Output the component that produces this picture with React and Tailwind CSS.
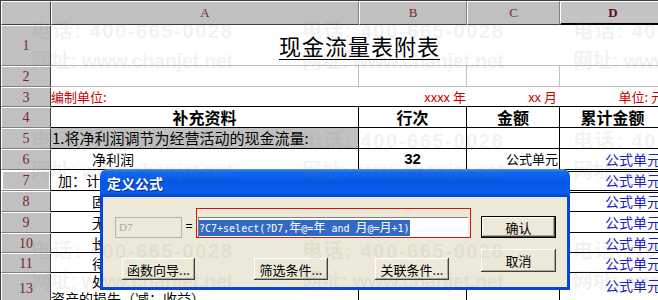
const cjk = "font-['Noto_Sans_CJK_SC',sans-serif]";
const black = "border-r border-b border-black";
const light = "border-r border-b border-[#c0c0c0]";
const blue = "justify-end pr-[4px] text-[14px] text-[#1c1cc8]";

function ColHead({ children, sel }) {
  return (
    <div
      className={
        sel
          ? "flex items-center justify-center bg-[#c4c4c4] border-t border-l border-white border-r border-r-[#808080] border-b-2 border-b-black font-['Liberation_Serif',serif] text-[13px] font-bold text-[#5c0f1c]"
          : "flex items-center justify-center bg-[#c0c0c0] border-t border-l border-white border-r border-b border-r-[#808080] border-b-[#404040] font-['Liberation_Serif',serif] text-[13px] text-[#7a1f2e]"
      }
    >
      {children}
    </div>
  );
}

function RowHead({ n, sel }) {
  return (
    <div
      className={
        sel
          ? "flex items-center justify-center bg-[#c0c0c0] border-t border-l border-white border-r border-b border-r-[#404040] border-b-[#808080] shadow-[inset_0_0_0_1px_#fff] font-['Liberation_Serif',serif] text-[14px] text-[#7a1f2e]"
          : "flex items-center justify-center bg-[#c0c0c0] border-t border-l border-white border-r border-b border-r-[#404040] border-b-[#808080] font-['Liberation_Serif',serif] text-[14px] text-[#7a1f2e]"
      }
    >
      {n}
    </div>
  );
}

function Cell({ className = "", children }) {
  return (
    <div className={`flex items-center whitespace-nowrap leading-[18px] ${className}`}>
      {children}
    </div>
  );
}

function Btn({ className = "", children }) {
  return (
    <div
      className={`flex items-center justify-center bg-[#ece9d8] text-[13px] leading-none text-black shadow-[inset_-1px_-1px_0_#404040,inset_1px_1px_0_#fff,inset_-2px_-2px_0_#aca899] ${className}`}
    >
      {children}
    </div>
  );
}

// half-width formula text, CJK chars a bit bigger like SimSun
function Z({ c }) {
  return <span className="font-['Noto_Sans_CJK_SC',sans-serif] text-[12px]">{c}</span>;
}

export default function App() {
  return (
    <div className={`relative w-[658px] h-[300px] overflow-hidden bg-white border-t border-l border-[#404040] ${cjk}`}>
      {/* Sheet */}
      <div className="grid grid-cols-[50px_308px_108px_93px_106px] grid-rows-[24px_41px_21px_20px_21px_21px_21px_21px_21px_21px_20px_20px_31px] text-black">
        {/* header row */}
        <div className="bg-[#c0c0c0] border-t border-l border-white border-r border-b border-r-[#404040] border-b-[#404040]" />
        <ColHead>A</ColHead>
        <ColHead>B</ColHead>
        <ColHead>C</ColHead>
        <ColHead sel>D</ColHead>

        {/* 1 */}
        <RowHead n="1" />
        <Cell className="col-span-4 justify-center border-b border-[#c0c0c0]">
          <span className="text-[22px] tracking-[1px] underline underline-offset-[4px] decoration-1 leading-[26px] pl-[2px]">现金流量表附表</span>
        </Cell>

        {/* 2 */}
        <RowHead n="2" />
        <Cell className={light} />
        <Cell className={light} />
        <Cell className={light} />
        <Cell className={light} />

        {/* 3 */}
        <RowHead n="3" />
        <Cell className="items-end border-b border-black text-[13px] text-[#cc0000]">编制单位:</Cell>
        <Cell className="items-end justify-end pr-[1px] border-b border-black text-[13px] text-[#cc0000]">{"xxxx 年"}</Cell>
        <Cell className="items-end justify-end pr-[3px] border-b border-black text-[13px] text-[#cc0000]">{"xx 月"}</Cell>
        <Cell className="items-end justify-end pr-[2px] border-b border-black text-[13px] text-[#cc0000]">{"单位: 元"}</Cell>

        {/* 4 */}
        <RowHead n="4" />
        <Cell className={`${black} justify-center text-[16px] font-bold`}>补充资料</Cell>
        <Cell className={`${black} justify-center text-[16px] font-bold`}>行次</Cell>
        <Cell className={`${black} justify-center text-[16px] font-bold`}>金额</Cell>
        <Cell className={`${black} justify-center text-[16px] font-bold`}>累计金额</Cell>

        {/* 5 */}
        <RowHead n="5" />
        <Cell className={`${black} bg-[#c0c0c0] text-[15px] pl-[1px]`}>1.将净利润调节为经营活动的现金流量:</Cell>
        <Cell className={black} />
        <Cell className={black} />
        <Cell className={black} />

        {/* 6 */}
        <RowHead n="6" />
        <Cell className={`${black} pl-[41px] text-[14px]`}>净利润</Cell>
        <Cell className={`${black} justify-center font-['Liberation_Sans',sans-serif] font-bold text-[15px]`}>32</Cell>
        <Cell className={`${black} justify-end pr-[1px] text-[13px]`}>公式单元</Cell>
        <Cell className={`${black} ${blue}`}>公式单元</Cell>

        {/* 7 */}
        <RowHead n="7" sel />
        <Cell className={`${black} pl-[7px] text-[14px]`}>加：计提的资产减值准备</Cell>
        <Cell className={black} />
        <Cell className={black} />
        <Cell className={`${black} ${blue} shadow-[inset_0_1px_0_#fff,inset_0_2px_0_#000]`}>公式单元</Cell>

        {/* 8 */}
        <RowHead n="8" />
        <Cell className={`${black} pl-[41px] text-[14px]`}>固定资产折旧</Cell>
        <Cell className={black} />
        <Cell className={black} />
        <Cell className={`${black} ${blue} shadow-[inset_0_1px_0_#fff,inset_0_2px_0_#000]`}>公式单元</Cell>

        {/* 9 */}
        <RowHead n="9" />
        <Cell className={`${black} pl-[41px] text-[14px]`}>无形资产摊销</Cell>
        <Cell className={black} />
        <Cell className={black} />
        <Cell className={`${black} ${blue}`}>公式单元</Cell>

        {/* 10 */}
        <RowHead n="10" />
        <Cell className={`${black} pl-[41px] text-[14px]`}>长期待摊费用摊销</Cell>
        <Cell className={black} />
        <Cell className={black} />
        <Cell className={`${black} ${blue}`}>公式单元</Cell>

        {/* 11 */}
        <RowHead n="11" />
        <Cell className={`${black} pl-[41px] text-[14px]`}>待摊费用减少（减：增加）</Cell>
        <Cell className={black} />
        <Cell className={black} />
        <Cell className={`${black} ${blue}`}>公式单元</Cell>

        {/* 13 */}
        <RowHead n="13" />
        <div className={`${black} text-[14px] leading-[17px] whitespace-nowrap`}>
          <div className="pl-[41px]">处置固定资产、无形资产和其他长期</div>
          <div>资产的损失（减：收益）</div>
        </div>
        <Cell className={black} />
        <Cell className={black} />
        <Cell className={`${black} ${blue} items-start pt-[3px]`}>公式单元</Cell>
      </div>

      {/* Dialog */}
      <div className="absolute left-[99px] top-[168px] z-10 flex h-[121px] w-[470px] flex-col">
        <div className="flex h-[28px] items-center rounded-t-[7px] bg-[linear-gradient(180deg,#4a95f7_0%,#1468ec_10%,#0457e4_45%,#0a5ce9_85%,#0445cf_100%)] pl-[7px] text-[14px] font-bold text-white [text-shadow:1px_1px_0_#0b2a8f]">
          定义公式
        </div>
        <div className="flex flex-1 border-x-[3px] border-b-[3px] border-[#0846d8] bg-[#ece9d8] pl-[12px] pt-[11px]">
          <div className="flex flex-col">
            <div className="flex items-end">
              <div className="flex h-[21px] w-[67px] items-center border border-[#b5b2a4] pl-[3px] font-['Liberation_Serif',serif] text-[11px] text-[#aca899]">
                D7
              </div>
              <span className="w-[14px] pb-[3px] text-center font-['Liberation_Sans',sans-serif] text-[12px]">=</span>
              <div className="h-[30px] w-[275px] border border-[#d01818] pl-[1px] pr-[2px] pt-[8px]">
                <div className="flex h-[20px] items-center border-t border-l border-[#808080] bg-white leading-[12px]">
                  <span className="bg-[#316ac5] py-[1px] font-['DejaVu_Sans_Mono',monospace] text-[10px] text-white">
                    ?C7+select(?D7,<Z c="年" />@=<Z c="年" /> and <Z c="月" />@=<Z c="月" />+1)
                  </span>
                </div>
              </div>
            </div>
            <div className="mt-[20px] flex pl-[7px]">
              <Btn className="h-[22px] w-[73px]">函数向导...</Btn>
              <Btn className="ml-[59px] h-[22px] w-[74px]">筛选条件...</Btn>
              <Btn className="ml-[47px] h-[22px] w-[74px]">关联条件...</Btn>
            </div>
          </div>
          <div className="ml-[10px] flex flex-col pt-[8px]">
            <Btn className="h-[22px] w-[75px] border border-black">确认</Btn>
            <Btn className="mt-[11px] h-[23px] w-[75px]">取消</Btn>
          </div>
        </div>
      </div>

      {/* Watermark */}
      <div className="pointer-events-none absolute inset-0 z-20 grid grid-cols-[271px_271px_271px] content-start gap-y-[50px] pl-[30px] pt-[15px] font-['Liberation_Sans','Noto_Sans_CJK_SC',sans-serif] text-[20px] font-bold leading-[30px] text-[rgba(120,120,120,0.1)] whitespace-nowrap">
        {[0, 1, 2, 3, 4, 5, 6, 7, 8].map((i) => (
          <div key={i}>
            <div className="tracking-[1.6px]">电话: 400-665-0028</div>
            <div className="tracking-[-0.4px]">网址: www.chanjet.net</div>
          </div>
        ))}
      </div>
    </div>
  );
}
